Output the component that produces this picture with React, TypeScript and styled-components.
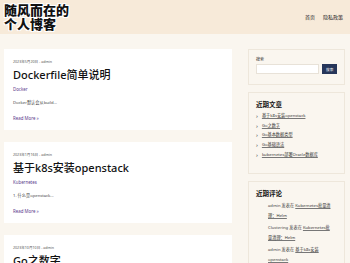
import React from "react";
import styled, { createGlobalStyle } from "styled-components";

const GlobalStyle = createGlobalStyle`
  html, body {
    margin: 0;
    padding: 0;
    overflow: hidden;
    background: #faf6ef;
  }
  body {
    font-family: "Noto Sans", "Noto Sans CJK SC", sans-serif;
    color: #222;
  }
`;

const posts = [
  { date: "2023年5月20日", title: "Dockerfile简单说明", cat: "Docker", excerpt: "Docker默认会从build..." },
  { date: "2023年1月16日", title: "基于k8s安装openstack", cat: "Kubernetes", excerpt: "1. 什么是openstack..." },
  { date: "2023年10月10日", title: "Go之数字", cat: "Go", excerpt: "..." },
];

const recent = ["基于k8s安装openstack", "Go之数字", "Go基本数据类型", "Go基础语法", "kubernetes部署Oracle数据库"];

const comments = [
  { who: "admin", link: "Kubernetes批量清理：Helm" },
  { who: "Clustering", link: "Kubernetes批量清理：Helm" },
  { who: "admin", link: "基于k8s安装openstack" },
];

const App = () => {
  return (
    <>
      <GlobalStyle />
      <Header>
        <SiteTitle>
          随风而在的
          <br />
          个人博客
        </SiteTitle>
        <Nav>
          <NavLink>首页</NavLink>
          <NavLink>隐私政策</NavLink>
        </Nav>
      </Header>
      <Main>
        <Content>
          {posts.map((p) => (
            <Card key={p.title}>
              <Meta>{p.date} - admin</Meta>
              <PostTitle>{p.title}</PostTitle>
              <Category>{p.cat}</Category>
              <Excerpt>{p.excerpt}</Excerpt>
              <ReadMore>Read More »</ReadMore>
            </Card>
          ))}
        </Content>
        <Sidebar>
          <Widget>
            <Label>搜索</Label>
            <SearchRow>
              <SearchInput />
              <SearchButton>搜索</SearchButton>
            </SearchRow>
          </Widget>
          <Widget $bottom={15}>
            <WidgetTitle>近期文章</WidgetTitle>
            <List>
              {recent.map((r) => (
                <ListItem key={r}>
                  <Chevron>›</Chevron>
                  <SideLink>{r}</SideLink>
                </ListItem>
              ))}
            </List>
          </Widget>
          <Widget>
            <WidgetTitle>近期评论</WidgetTitle>
            <Comments>
              {comments.map((c, i) => (
                <Comment key={i}>
                  {c.who} 发表在 <SideLink>{c.link}</SideLink>
                </Comment>
              ))}
            </Comments>
          </Widget>
        </Sidebar>
      </Main>
    </>
  );
};
export default App;

const Header = styled.header`
  height: 34px;
  background: #f7ead9;
  display: flex;
  align-items: center;
  justify-content: space-between;
  padding: 0 7px 0 4px;
`;

const SiteTitle = styled.h1`
  margin: 0;
  font-size: 13px;
  line-height: 14px;
  font-weight: 900;
  color: #111;
  font-family: "Noto Sans CJK SC", sans-serif;
  text-shadow: 1px 1px 0 #fff, -1px 1px 0 #fff, 1px -1px 0 #fff, -1px -1px 0 #fff;
`;

const Nav = styled.nav`
  display: flex;
  gap: 8px;
  margin-top: -2px;
`;

const NavLink = styled.span`
  font-size: 5px;
  color: #222;
`;

const Main = styled.main`
  display: grid;
  grid-template-columns: 228px 97px;
  column-gap: 16px;
  padding: 15px 5px 0 4px;
`;

const Content = styled.div`
  display: flex;
  flex-direction: column;
  gap: 12px;
`;

const Card = styled.article`
  background: #fff;
  padding: 10px 9px 10px 9px;
  height: 81px;
  box-sizing: border-box;
`;

const Meta = styled.div`
  font-size: 3.6px;
  color: #555;
  line-height: 6px;
`;

const PostTitle = styled.h2`
  margin: 2px 0 0;
  font-size: 11px;
  line-height: 15px;
  font-weight: 500;
  color: #111;
`;

const Category = styled.div`
  font-size: 4.4px;
  color: #5b3a8c;
  margin-top: 4px;
  line-height: 6px;
`;

const Excerpt = styled.p`
  font-size: 4.2px;
  color: #444;
  margin: 8px 0 0;
  line-height: 6px;
`;

const ReadMore = styled.div`
  font-size: 4.4px;
  color: #5b3a8c;
  margin-top: 9px;
  line-height: 6px;
`;

const Sidebar = styled.aside`
  display: flex;
  flex-direction: column;
  gap: 7px;
`;

const Widget = styled.section<{ $bottom?: number }>`
  border: 1px solid #eee7db;
  background: #faf6ef;
  padding: 7px 7px ${(p) => p.$bottom ?? 10}px;
`;

const Label = styled.div`
  font-size: 4px;
  color: #333;
  line-height: 6px;
`;

const SearchRow = styled.div`
  display: flex;
  gap: 3px;
  margin-top: 1px;
`;

const SearchInput = styled.div`
  width: 65px;
  height: 10px;
  background: #fff;
  border: 1px solid #e8e2d8;
  box-sizing: border-box;
`;

const SearchButton = styled.div`
  width: 15px;
  height: 10px;
  background: #26365a;
  color: #fff;
  font-size: 3.6px;
  display: flex;
  align-items: center;
  justify-content: center;
`;

const WidgetTitle = styled.h3`
  margin: 0;
  font-size: 6.5px;
  line-height: 9px;
  font-weight: 700;
  color: #111;
`;

const List = styled.ul`
  list-style: none;
  margin: 4px 0 0;
  padding: 0;
  display: flex;
  flex-direction: column;
  gap: 3.7px;
`;

const ListItem = styled.li`
  display: flex;
  align-items: center;
  gap: 4px;
  font-size: 4.2px;
  line-height: 6px;
`;

const Chevron = styled.span`
  font-size: 6px;
  color: #333;
  line-height: 6px;
`;

const SideLink = styled.a`
  color: #333;
  text-decoration: underline;
  text-decoration-color: #777;
`;

const Comments = styled.ul`
  list-style: none;
  margin: 3px 0 0;
  padding: 0 6px 0 12px;
  display: flex;
  flex-direction: column;
  gap: 2px;
`;

const Comment = styled.li`
  font-size: 4.2px;
  line-height: 10px;
  color: #444;
`;
